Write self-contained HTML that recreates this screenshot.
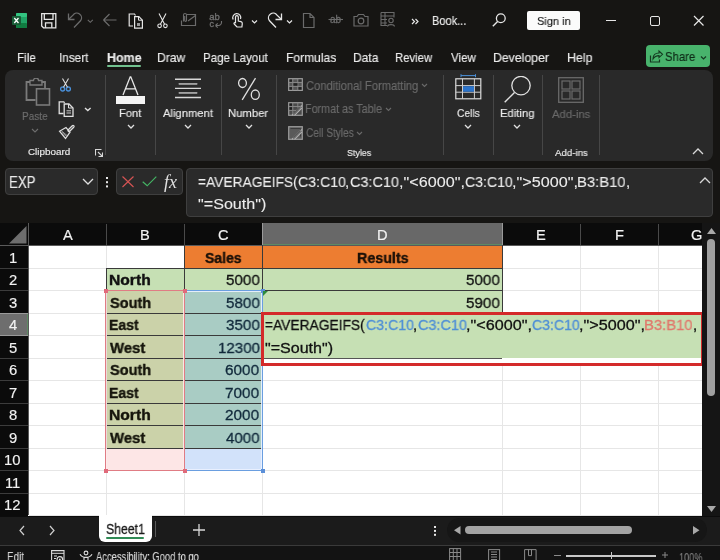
<!DOCTYPE html>
<html><head><meta charset="utf-8">
<style>
*{margin:0;padding:0;box-sizing:border-box}
html,body{width:720px;height:560px;overflow:hidden;background:#161513;font-family:"Liberation Sans",sans-serif;color:#fff}
.a{position:absolute}
svg.a{will-change:transform}
.t{position:absolute;white-space:pre;line-height:1;will-change:transform}
</style></head><body>
<svg class="a" style="left:12px;top:13px" width="16" height="16" viewBox="0 0 16 16"><rect x="4" y="0" width="11" height="15" rx="1.5" fill="#21a366"/><rect x="4" y="0" width="11" height="4" rx="1" fill="#33c481"/><rect x="4" y="10" width="11" height="5" rx="1" fill="#107c41"/><rect x="0" y="3" width="9" height="9" rx="1" fill="#185c37"/><path d="M2.3 5l4.2 5M6.5 5l-4.2 5" stroke="#fff" stroke-width="1.3"/></svg>
<svg class="a" style="left:41px;top:13px" width="16" height="16" viewBox="0 0 16 16"><path d="M.7 .7H14.8V14.8H2.5L.7 13z" fill="none" stroke="#e6e6e6" stroke-width="1.3"/><path d="M3.3 .7V6.3H12V.7M4.5 14.8V9.8H10.8V14.8" fill="none" stroke="#e6e6e6" stroke-width="1.3"/></svg>
<svg class="a" style="left:67px;top:12px" width="16" height="17" viewBox="0 0 16 17"><path d="M7 15.5L13.7 8.5A4.6 4.6 0 0 0 6 3.2L2 7" fill="none" stroke="#6b6b6b" stroke-width="1.3"/><path d="M1.5 1.5V7.5H7.5" fill="none" stroke="#6b6b6b" stroke-width="1.3"/></svg>
<svg class="a" style="left:86.5px;top:18.5px" width="7" height="5" viewBox="0 0 7 5"><path d="M.8 .8l2.5 2.5 2.5-2.5" fill="none" stroke="#6b6b6b" stroke-width="1.1"/></svg>
<svg class="a" style="left:102px;top:12px" width="16" height="16" viewBox="0 0 16 16"><path d="M1.5 8h13M1.5 8l6-6M1.5 8l6 6" fill="none" stroke="#6b6b6b" stroke-width="1.2"/></svg>
<svg class="a" style="left:128px;top:12.5px" width="16" height="17" viewBox="0 0 16 17"><path d="M5 13H1.2V1h5.3l1 1.5" fill="none" stroke="#e6e6e6" stroke-width="1.2"/><path d="M6.6 3.7h4.3l3.5 3.5v7.9H6.6z" fill="none" stroke="#e6e6e6" stroke-width="1.2"/><path d="M10.5 3.7v3.5h3.9" fill="none" stroke="#e6e6e6" stroke-width="1"/><rect x="9" y="10" width="3" height="3" fill="#9a9a9a"/></svg>
<svg class="a" style="left:157px;top:12px" width="11" height="17" viewBox="0 0 11 17"><circle cx="2.6" cy="13.8" r="1.8" fill="none" stroke="#e6e6e6" stroke-width="1.1"/><circle cx="8.4" cy="13.8" r="1.8" fill="none" stroke="#e6e6e6" stroke-width="1.1"/><path d="M3.4 12.2L9 1.5M7.6 12.2L2 1.5" stroke="#e6e6e6" stroke-width="1.1"/></svg>
<svg class="a" style="left:180px;top:12px" width="17" height="15" viewBox="0 0 17 15"><path d="M6.5 2.5h9v11h-14v-5" fill="none" stroke="#6b6b6b" stroke-width="1.2"/><path d="M3.5 9.5V3a1.5 1.5 0 0 1 3 0v5.5a.9.9 0 0 1-1.8 0V4" fill="none" stroke="#6b6b6b" stroke-width="1.1"/><path d="M8 9l7.5-5.5" stroke="#6b6b6b" stroke-width="1.1"/></svg>
<svg class="a" style="left:209px;top:13px" width="15" height="16" viewBox="0 0 15 16"><text x="0.2" y="7.4" font-family="Liberation Sans" font-size="9.5" fill="#707070" stroke="#707070" stroke-width=".35">ab</text><text x="0.4" y="14.2" font-family="Liberation Sans" font-size="9" fill="#707070" stroke="#707070" stroke-width=".35">c</text><path d="M12.5 8v1.5a3 3 0 0 1-3 3H6.5M6.5 12.5l2.2-2.2M6.5 12.5l2.2 2.2" fill="none" stroke="#707070" stroke-width="1.1"/></svg>
<svg class="a" style="left:230px;top:12px" width="15" height="17" viewBox="0 0 15 17"><path d="M5.5 10V5a1.4 1.4 0 0 1 2.8 0v4l2.7.6c1 .3 1.4 1 1.3 2l-.4 3.4H7L4.2 12c-.6-.8 0-1.8 1.3-1.3z" fill="none" stroke="#e6e6e6" stroke-width="1.2"/><path d="M3.2 7.5A4 4 0 1 1 10.5 7" fill="none" stroke="#e6e6e6" stroke-width="1.2"/></svg>
<svg class="a" style="left:251px;top:19px" width="7" height="5" viewBox="0 0 7 5"><path d="M1 1.5l2.5 2.5 2.5-2.5" fill="none" stroke="#e6e6e6" stroke-width="1.2"/></svg>
<svg class="a" style="left:267px;top:12px" width="16" height="17" viewBox="0 0 16 17"><path d="M9 15.5L2.3 8.5A4.6 4.6 0 0 1 10 3.2L14 7" fill="none" stroke="#e6e6e6" stroke-width="1.3"/><path d="M14.5 1.5V7.5H8.5" fill="none" stroke="#e6e6e6" stroke-width="1.3"/></svg>
<svg class="a" style="left:286px;top:19px" width="7" height="5" viewBox="0 0 7 5"><path d="M1 1.5l2.5 2.5 2.5-2.5" fill="none" stroke="#e6e6e6" stroke-width="1.2"/></svg>
<svg class="a" style="left:302px;top:12px" width="14" height="17" viewBox="0 0 14 17"><path d="M1.5 1.5h6.5l4 4v10h-10.5z M8 1.5v4h4" fill="none" stroke="#6b6b6b" stroke-width="1.2"/></svg>
<svg class="a" style="left:328px;top:10px" width="16" height="16" viewBox="0 0 16 16"><text x="2" y="13" font-family="Liberation Sans" font-size="10" fill="#6b6b6b" stroke="#6b6b6b" stroke-width=".3">ab</text><path d="M.5 9.5h14.5" stroke="#6b6b6b" stroke-width="1.1"/></svg>
<svg class="a" style="left:353px;top:12px" width="16" height="16" viewBox="0 0 16 16"><path d="M1 4.5h3l1.5-2h5l1.5 2h3v9.5h-14z" fill="none" stroke="#6b6b6b" stroke-width="1.2"/><circle cx="8" cy="9" r="2.8" fill="none" stroke="#6b6b6b" stroke-width="1.2"/></svg>
<svg class="a" style="left:380px;top:11px" width="16" height="17" viewBox="0 0 16 17"><path d="M1 1.5h13v5M1 1.5v13h6M1 5h13M1 8.5h6M1 12h6M5 1.5v13" fill="none" stroke="#6b6b6b" stroke-width="1.1"/><circle cx="11" cy="9.5" r="2.2" fill="none" stroke="#6b6b6b" stroke-width="1.1"/><path d="M7.5 15.5c.5-2.5 6.5-2.5 7 0" fill="none" stroke="#6b6b6b" stroke-width="1.1"/></svg>
<svg class="a" style="left:410.5px;top:18px" width="9" height="7" viewBox="0 0 9 7"><path d="M1 1l2.5 2.5L1 6M4.5 1L7 3.5 4.5 6" fill="none" stroke="#e6e6e6" stroke-width="1.2"/></svg>
<svg class="a" style="left:492px;top:13px" width="14" height="14" viewBox="0 0 14 14"><circle cx="8.8" cy="5.2" r="4.4" fill="none" stroke="#e6e6e6" stroke-width="1.3"/><path d="M5.6 8.4L0.8 13.2" stroke="#e6e6e6" stroke-width="1.4"/></svg>
<div class="a" style="left:527px;top:11px;width:53px;height:19px;background:#fbfbfb;border-radius:2px"></div>
<div class="a" style="left:606px;top:20px;width:10px;height:1px;background:#e6e6e6;"></div>
<div class="a" style="left:650px;top:16px;width:10px;height:10px;border:1.2px solid #e6e6e6;border-radius:2px"></div>
<svg class="a" style="left:693px;top:15px" width="12" height="12" viewBox="0 0 12 12"><path d="M1 1l9.5 9.5M10.5 1L1 10.5" stroke="#e6e6e6" stroke-width="1.2"/></svg>
<div class="a" style="left:107px;top:65px;width:34px;height:2px;background:#72c28f;border-radius:1px"></div>
<div class="a" style="left:646px;top:45px;width:64px;height:22px;background:#48b36c;border-radius:4px"></div>
<svg class="a" style="left:649px;top:49px" width="15" height="15" viewBox="0 0 15 15"><path d="M1.5 6.5v6.5h9v-2.5" fill="none" stroke="#143820" stroke-width="1.2"/><path d="M4 10c0-4 2.5-6 6-6V2l3.5 3.3L10 8.6V6.6c-3 0-4.5 1-6 3.4z" fill="none" stroke="#143820" stroke-width="1.1"/></svg>
<svg class="a" style="left:700px;top:55px" width="7" height="5" viewBox="0 0 7 5"><path d="M1 1.5l2.5 2.5 2.5-2.5" fill="none" stroke="#143820" stroke-width="1.2"/></svg>
<div class="a" style="left:5px;top:70px;width:708px;height:91px;background:#292929;border-radius:8px"></div>
<div class="a" style="left:105px;top:75px;width:1px;height:80px;background:#464646;"></div>
<div class="a" style="left:155px;top:75px;width:1px;height:80px;background:#464646;"></div>
<div class="a" style="left:221px;top:75px;width:1px;height:80px;background:#464646;"></div>
<div class="a" style="left:276px;top:75px;width:1px;height:80px;background:#464646;"></div>
<div class="a" style="left:443px;top:75px;width:1px;height:80px;background:#464646;"></div>
<div class="a" style="left:493px;top:75px;width:1px;height:80px;background:#464646;"></div>
<div class="a" style="left:542px;top:75px;width:1px;height:80px;background:#464646;"></div>
<div class="a" style="left:599px;top:75px;width:1px;height:80px;background:#464646;"></div>
<svg class="a" style="left:24px;top:78px" width="27" height="28" viewBox="0 0 27 28"><path d="M6 4H2.5v18h9" fill="none" stroke="#7a7a7a" stroke-width="1.8"/><path d="M17.5 4H21v7" fill="none" stroke="#7a7a7a" stroke-width="1.8"/><path d="M6 2.5h3.5a2.5 2.5 0 0 1 5 0H18v4.5H6z" fill="none" stroke="#7a7a7a" stroke-width="1.3"/><rect x="12.5" y="10.8" width="13" height="16.2" fill="none" stroke="#7a7a7a" stroke-width="1.6"/></svg>
<svg class="a" style="left:31px;top:128px" width="8" height="5" viewBox="0 0 8 5"><path d="M1 1l3 3 3-3" fill="none" stroke="#6e6e6e" stroke-width="1.1"/></svg>
<svg class="a" style="left:60px;top:78px" width="11" height="14" viewBox="0 0 11 14"><circle cx="2.6" cy="11" r="2" fill="none" stroke="#4a90d9" stroke-width="1.4"/><circle cx="8.4" cy="11" r="2" fill="none" stroke="#4a90d9" stroke-width="1.4"/><path d="M3.5 9.3L8.5 0.5M7.5 9.3L2.5 0.5" stroke="#dcdcdc" stroke-width="1.1"/></svg>
<svg class="a" style="left:58px;top:101px" width="16" height="16" viewBox="0 0 16 16"><path d="M5.5 12.5H1.2V.8h4.5l1 1" fill="none" stroke="#e0e0e0" stroke-width="1.3"/><path d="M6.2 3h4.8l4 4v8.5H6.2z" fill="none" stroke="#e0e0e0" stroke-width="1.3"/><path d="M10.5 3v4h4" fill="none" stroke="#e0e0e0" stroke-width="1"/><path d="M8.5 9.8h4.5M8.5 12h4.5" stroke="#e0e0e0" stroke-width=".9"/></svg>
<svg class="a" style="left:84px;top:107px" width="8" height="5" viewBox="0 0 8 5"><path d="M1 1l2.8 2.5L6.6 1" fill="none" stroke="#e0e0e0" stroke-width="1.4"/></svg>
<svg class="a" style="left:58px;top:124px" width="17" height="16" viewBox="0 0 17 16"><path d="M11 6.5L15 2.5" stroke="#e0e0e0" stroke-width="3.2" stroke-linecap="round"/><path d="M11 6.5L15 2.5" stroke="#292929" stroke-width="1" stroke-linecap="round"/><path d="M1.5 7.2L8 3.6L12 8.2L7.5 14.5z" fill="none" stroke="#e0e0e0" stroke-width="1.2"/><path d="M4 8.5L9 13M3 6.5l6 5" stroke="#bdbdbd" stroke-width=".8"/></svg>
<svg class="a" style="left:95px;top:149px" width="8" height="8" viewBox="0 0 8 8"><path d="M.5 6.5v-6h6M3 3l4.5 4.5M7.5 3.5v4h-4" fill="none" stroke="#d8d8d8" stroke-width="1.1"/></svg>
<svg class="a" style="left:122px;top:76px" width="17" height="20" viewBox="0 0 17 20"><path d="M1 19L8.2 0.8h.6L16 19M3.5 12.8h10" fill="none" stroke="#e8e8e8" stroke-width="1.3"/></svg>
<div class="a" style="left:116px;top:96px;width:29px;height:8px;background:#f4f4f4;"></div>
<svg class="a" style="left:127px;top:124px" width="8" height="5" viewBox="0 0 8 5"><path d="M1 1l3 3 3-3" fill="none" stroke="#e0e0e0" stroke-width="1.3"/></svg>
<svg class="a" style="left:175px;top:78px" width="26" height="21" viewBox="0 0 26 21"><path d="M0 1.25h26M3.8 5.8h18.4M0 10.4h26M3.8 14.9h18.4M0 19.5h26" stroke="#d8d8d8" stroke-width="1.3"/><path d="M3.8 5.8h18.4M3.8 14.9h18.4" stroke="#a0a0a0" stroke-width="1.4"/></svg>
<svg class="a" style="left:184px;top:124px" width="8" height="5" viewBox="0 0 8 5"><path d="M1 1l3 3 3-3" fill="none" stroke="#e0e0e0" stroke-width="1.3"/></svg>
<svg class="a" style="left:238px;top:77px" width="22" height="24" viewBox="0 0 22 24"><ellipse cx="4.5" cy="6" rx="3.9" ry="4.5" fill="none" stroke="#e0e0e0" stroke-width="1.3"/><ellipse cx="17.3" cy="17.7" rx="4" ry="4.7" fill="none" stroke="#e0e0e0" stroke-width="1.3"/><path d="M17.5 1.2L4.2 22.8" stroke="#e0e0e0" stroke-width="1.3"/></svg>
<svg class="a" style="left:245px;top:124px" width="8" height="5" viewBox="0 0 8 5"><path d="M1 1l3 3 3-3" fill="none" stroke="#e0e0e0" stroke-width="1.3"/></svg>
<svg class="a" style="left:288px;top:78px" width="15" height="13" viewBox="0 0 15 13"><rect x=".7" y=".7" width="13.6" height="11.8" fill="#555" stroke="#9c9c9c" stroke-width="1.2"/><path d="M.7 4.5h13.6M.7 8.4h13.6M4.8 .7v11.8M9.8 .7v11.8" stroke="#8a8a8a" stroke-width=".9"/><rect x="1.5" y="1.5" width="2.5" height="2.3" fill="#222"/><rect x="10.5" y="1.5" width="3" height="2.3" fill="#333"/><rect x="5.5" y="5.2" width="4" height="2.5" fill="#222"/><rect x="1.5" y="9.1" width="2.5" height="2.5" fill="#222"/><rect x="10.5" y="9.1" width="3" height="2.5" fill="#222"/></svg>
<svg class="a" style="left:421px;top:83px" width="7" height="5" viewBox="0 0 7 5"><path d="M1 1l2.5 2.5 2.5-2.5" fill="none" stroke="#6a6a6a" stroke-width="1.1"/></svg>
<svg class="a" style="left:288px;top:102px" width="15" height="14" viewBox="0 0 15 14"><rect x=".7" y=".7" width="13.6" height="12.6" fill="#4a4a4a" stroke="#9c9c9c" stroke-width="1.2"/><path d="M.7 4.5h13.6M.7 8.4h8M4.8 .7v12M9.8 .7v5" stroke="#8a8a8a" stroke-width=".9"/><rect x="1.5" y="1.5" width="2.5" height="2.3" fill="#1e1e1e"/><rect x="1.5" y="5.2" width="2.5" height="2.5" fill="#1e1e1e"/><path d="M4 13.3L13.8 3.5M6.5 13.3l7.3-7.3" stroke="#b0b0b0" stroke-width="1.1"/><path d="M5.2 12.2l7.3-7.3" stroke="#2a2a2a" stroke-width="1"/></svg>
<svg class="a" style="left:385px;top:107px" width="7" height="5" viewBox="0 0 7 5"><path d="M1 1l2.5 2.5 2.5-2.5" fill="none" stroke="#6a6a6a" stroke-width="1.1"/></svg>
<svg class="a" style="left:288px;top:125.5px" width="15" height="14" viewBox="0 0 15 14"><rect x=".7" y=".7" width="13.6" height="12.6" fill="#5a5a5a" stroke="#9c9c9c" stroke-width="1.2"/><path d="M2.5 2.5h10v8" fill="none" stroke="#3a3a3a" stroke-width="1"/><path d="M4 13.3L13.8 3.5M6.5 13.3l7.3-7.3" stroke="#b0b0b0" stroke-width="1.1"/><path d="M5.2 12.2l7.3-7.3" stroke="#2a2a2a" stroke-width="1"/></svg>
<svg class="a" style="left:356px;top:131px" width="7" height="5" viewBox="0 0 7 5"><path d="M1 1l2.5 2.5 2.5-2.5" fill="none" stroke="#6a6a6a" stroke-width="1.1"/></svg>
<svg class="a" style="left:455px;top:74px" width="27" height="26" viewBox="0 0 27 26"><path d="M6 1.6h14.5M6 .2v3M20.5 .2v3" stroke="#4a90d9" stroke-width="1"/><rect x=".8" y="4.8" width="25" height="20" fill="none" stroke="#dcdcdc" stroke-width="1.2"/><path d="M.8 11.6h25M.8 18.2h25M7.5 4.8v20M19.4 4.8v20" stroke="#d0d0d0" stroke-width="1"/><rect x="8" y="12.2" width="11" height="5.5" fill="#2b74cc"/></svg>
<svg class="a" style="left:464px;top:124px" width="8" height="5" viewBox="0 0 8 5"><path d="M1 1l3 3 3-3" fill="none" stroke="#e0e0e0" stroke-width="1.3"/></svg>
<svg class="a" style="left:504px;top:76px" width="28" height="28" viewBox="0 0 28 28"><circle cx="17" cy="9.6" r="9.2" fill="none" stroke="#e0e0e0" stroke-width="1.3"/><path d="M10.5 16.5L.7 26.3" stroke="#e0e0e0" stroke-width="1.4"/></svg>
<svg class="a" style="left:513px;top:124px" width="8" height="5" viewBox="0 0 8 5"><path d="M1 1l3 3 3-3" fill="none" stroke="#e0e0e0" stroke-width="1.3"/></svg>
<svg class="a" style="left:558px;top:77px" width="26" height="26" viewBox="0 0 26 26"><rect x=".7" y=".7" width="24.6" height="24.6" fill="none" stroke="#6a6a6a" stroke-width="1.3"/><rect x="4" y="4" width="8" height="8" fill="none" stroke="#6a6a6a" stroke-width="1.2"/><rect x="14" y="4" width="8" height="8" fill="none" stroke="#6a6a6a" stroke-width="1.2"/><rect x="4" y="14" width="8" height="8" fill="none" stroke="#6a6a6a" stroke-width="1.2"/><rect x="14" y="14" width="8" height="8" fill="none" stroke="#6a6a6a" stroke-width="1.2"/></svg>
<svg class="a" style="left:692px;top:148px" width="12" height="7" viewBox="0 0 12 7"><path d="M1 6l5-5 5 5" fill="none" stroke="#d8d8d8" stroke-width="1.3"/></svg>
<div class="a" style="left:5px;top:168px;width:93px;height:27px;background:#2a2a2a;border:1px solid #3f3f3f;border-radius:4px;box-sizing:border-box"></div>
<svg class="a" style="left:82px;top:178px" width="12" height="7" viewBox="0 0 12 7"><path d="M1 1l5 5 5-5" fill="none" stroke="#e0e0e0" stroke-width="1.3"/></svg>
<svg class="a" style="left:105.5px;top:176.5px" width="2" height="11" viewBox="0 0 2 11"><rect x="0" y="0" width="2" height="2" fill="#e8e8e8"/><rect x="0" y="4.2" width="2" height="2" fill="#e8e8e8"/><rect x="0" y="8.4" width="2" height="2" fill="#e8e8e8"/></svg>
<div class="a" style="left:116px;top:168px;width:67px;height:27px;background:#2a2a2a;border:1px solid #3f3f3f;border-radius:4px;box-sizing:border-box"></div>
<svg class="a" style="left:121.5px;top:176px" width="12" height="12" viewBox="0 0 12 12"><path d="M.5 .5l11 10.5M11.5 .5L.5 11" stroke="#d65454" stroke-width="1.15"/></svg>
<svg class="a" style="left:141.8px;top:176px" width="15" height="11" viewBox="0 0 15 11"><path d="M.7 5.8l4.5 4L14.3 .7" fill="none" stroke="#44b464" stroke-width="1.2"/></svg>
<div class="t" style="left:164px;top:172.5px;font-family:'Liberation Serif';font-style:italic;font-size:18px;color:#e0e0e0">fx</div>
<div class="a" style="left:186px;top:168px;width:527px;height:49px;background:#2a2a2a;border:1px solid #3f3f3f;border-radius:4px;box-sizing:border-box"></div>
<svg class="a" style="left:699px;top:177px" width="12" height="7" viewBox="0 0 12 7"><path d="M1 6l5-5 5 5" fill="none" stroke="#d8d8d8" stroke-width="1.3"/></svg>
<div class="a" style="left:0px;top:223px;width:702px;height:293px;background:#ffffff;"></div>
<div class="a" style="left:0px;top:223px;width:702px;height:22px;background:#0b0b0b;"></div>
<div class="a" style="left:0px;top:223px;width:28px;height:293px;background:#0b0b0b;"></div>
<svg class="a" style="left:9px;top:226px" width="18" height="18" viewBox="0 0 18 18"><path d="M17.5 0V17.5H0z" fill="#6e6e6e"/></svg>
<div class="a" style="left:263px;top:223px;width:239px;height:22px;background:#686868;"></div>
<div class="a" style="left:0px;top:314px;width:28px;height:21px;background:#6e6e6e;"></div>
<div class="a" style="left:106px;top:246px;width:1px;height:269px;background:#e6e6e6;"></div>
<div class="a" style="left:184px;top:246px;width:1px;height:269px;background:#e6e6e6;"></div>
<div class="a" style="left:262px;top:246px;width:1px;height:269px;background:#e6e6e6;"></div>
<div class="a" style="left:502px;top:246px;width:1px;height:269px;background:#e6e6e6;"></div>
<div class="a" style="left:580px;top:246px;width:1px;height:269px;background:#e6e6e6;"></div>
<div class="a" style="left:658px;top:246px;width:1px;height:269px;background:#e6e6e6;"></div>
<div class="a" style="left:29px;top:268px;width:673px;height:1px;background:#e6e6e6;"></div>
<div class="a" style="left:29px;top:290px;width:673px;height:1px;background:#e6e6e6;"></div>
<div class="a" style="left:29px;top:313px;width:673px;height:1px;background:#e6e6e6;"></div>
<div class="a" style="left:29px;top:335px;width:673px;height:1px;background:#e6e6e6;"></div>
<div class="a" style="left:29px;top:358px;width:673px;height:1px;background:#e6e6e6;"></div>
<div class="a" style="left:29px;top:380px;width:673px;height:1px;background:#e6e6e6;"></div>
<div class="a" style="left:29px;top:403px;width:673px;height:1px;background:#e6e6e6;"></div>
<div class="a" style="left:29px;top:425px;width:673px;height:1px;background:#e6e6e6;"></div>
<div class="a" style="left:29px;top:448px;width:673px;height:1px;background:#e6e6e6;"></div>
<div class="a" style="left:29px;top:470px;width:673px;height:1px;background:#e6e6e6;"></div>
<div class="a" style="left:29px;top:493px;width:673px;height:1px;background:#e6e6e6;"></div>
<div class="a" style="left:29px;top:515px;width:673px;height:1px;background:#e6e6e6;"></div>
<div class="a" style="left:28px;top:223px;width:1px;height:292px;background:#5a5a5a;"></div>
<div class="a" style="left:0px;top:245px;width:702px;height:1px;background:#5a5a5a;"></div>
<div class="a" style="left:106px;top:224px;width:1px;height:21px;background:#4a4a4a;"></div>
<div class="a" style="left:184px;top:224px;width:1px;height:21px;background:#4a4a4a;"></div>
<div class="a" style="left:262px;top:224px;width:1px;height:21px;background:#4a4a4a;"></div>
<div class="a" style="left:502px;top:224px;width:1px;height:21px;background:#4a4a4a;"></div>
<div class="a" style="left:580px;top:224px;width:1px;height:21px;background:#4a4a4a;"></div>
<div class="a" style="left:658px;top:224px;width:1px;height:21px;background:#4a4a4a;"></div>
<div class="a" style="left:0px;top:268px;width:28px;height:1px;background:#3c3c3c;"></div>
<div class="a" style="left:0px;top:290px;width:28px;height:1px;background:#3c3c3c;"></div>
<div class="a" style="left:0px;top:313px;width:28px;height:1px;background:#3c3c3c;"></div>
<div class="a" style="left:0px;top:335px;width:28px;height:1px;background:#3c3c3c;"></div>
<div class="a" style="left:0px;top:358px;width:28px;height:1px;background:#3c3c3c;"></div>
<div class="a" style="left:0px;top:380px;width:28px;height:1px;background:#3c3c3c;"></div>
<div class="a" style="left:0px;top:403px;width:28px;height:1px;background:#3c3c3c;"></div>
<div class="a" style="left:0px;top:425px;width:28px;height:1px;background:#3c3c3c;"></div>
<div class="a" style="left:0px;top:448px;width:28px;height:1px;background:#3c3c3c;"></div>
<div class="a" style="left:0px;top:470px;width:28px;height:1px;background:#3c3c3c;"></div>
<div class="a" style="left:0px;top:493px;width:28px;height:1px;background:#3c3c3c;"></div>
<div class="a" style="left:263px;top:244px;width:239px;height:1px;background:#5f8a64;"></div>
<div class="a" style="left:262px;top:223px;width:1px;height:22px;background:#9a9a9a;"></div>
<div class="a" style="left:502px;top:223px;width:1px;height:22px;background:#9a9a9a;"></div>
<div class="a" style="left:27px;top:314px;width:1px;height:21px;background:#5f8a64;"></div>
<div class="a" style="left:0px;top:313px;width:28px;height:1px;background:#9a9a9a;"></div>
<div class="a" style="left:0px;top:335px;width:28px;height:1px;background:#9a9a9a;"></div>
<div class="a" style="left:184px;top:245px;width:319px;height:24px;background:#ed7d31;"></div>
<div class="a" style="left:106px;top:268px;width:157px;height:23px;background:#c6e0b4;"></div>
<div class="a" style="left:262px;top:268px;width:241px;height:91px;background:#c6e0b4;"></div>
<div class="a" style="left:106px;top:290px;width:79px;height:159px;background:#cbd2a9;"></div>
<div class="a" style="left:184px;top:290px;width:79px;height:159px;background:#a9ccc4;"></div>
<div class="a" style="left:106px;top:268px;width:397px;height:1px;background:#3a3a3a;"></div>
<div class="a" style="left:106px;top:290px;width:397px;height:1px;background:#3a3a3a;"></div>
<div class="a" style="left:106px;top:313px;width:397px;height:1px;background:#3a3a3a;"></div>
<div class="a" style="left:106px;top:335px;width:157px;height:1px;background:#3a3a3a;"></div>
<div class="a" style="left:106px;top:358px;width:157px;height:1px;background:#3a3a3a;"></div>
<div class="a" style="left:106px;top:380px;width:157px;height:1px;background:#3a3a3a;"></div>
<div class="a" style="left:106px;top:403px;width:157px;height:1px;background:#3a3a3a;"></div>
<div class="a" style="left:106px;top:425px;width:157px;height:1px;background:#3a3a3a;"></div>
<div class="a" style="left:106px;top:448px;width:157px;height:1px;background:#3a3a3a;"></div>
<div class="a" style="left:184px;top:245px;width:319px;height:1px;background:#5a5a5a;"></div>
<div class="a" style="left:106px;top:268px;width:1px;height:181px;background:#3a3a3a;"></div>
<div class="a" style="left:184px;top:245px;width:1px;height:204px;background:#3a3a3a;"></div>
<div class="a" style="left:262px;top:245px;width:1px;height:204px;background:#3a3a3a;"></div>
<div class="a" style="left:502px;top:245px;width:1px;height:69px;background:#3a3a3a;"></div>
<div class="a" style="left:262px;top:313px;width:241px;height:1px;background:#3a3a3a;"></div>
<div class="a" style="left:107px;top:449px;width:77px;height:21px;background:#fde6e6;"></div>
<div class="a" style="left:185px;top:449px;width:77px;height:21px;background:#d2e2fa;"></div>
<div class="a" style="left:106px;top:290px;width:1px;height:181px;background:rgba(255,235,235,.9);"></div>
<div class="a" style="left:183px;top:291px;width:1px;height:179px;background:rgba(255,235,235,.9);"></div>
<div class="a" style="left:106px;top:290px;width:77px;height:1px;background:rgba(255,235,235,.9);"></div>
<div class="a" style="left:106px;top:470px;width:77px;height:1px;background:rgba(255,235,235,.9);"></div>
<div class="a" style="left:105px;top:290px;width:80px;height:1px;background:#e07c84;"></div>
<div class="a" style="left:105px;top:290px;width:1px;height:181px;background:#e07c84;"></div>
<div class="a" style="left:184px;top:290px;width:1px;height:181px;background:#e07c84;"></div>
<div class="a" style="left:105px;top:470px;width:80px;height:1px;background:#e07c84;"></div>
<div class="a" style="left:185px;top:291px;width:76px;height:1px;background:rgba(235,242,255,.9);"></div>
<div class="a" style="left:185px;top:469px;width:76px;height:1px;background:rgba(235,242,255,.9);"></div>
<div class="a" style="left:261px;top:291px;width:1px;height:179px;background:rgba(235,242,255,.9);"></div>
<div class="a" style="left:184px;top:290px;width:79px;height:1px;background:#6a9ee0;"></div>
<div class="a" style="left:262px;top:290px;width:1px;height:181px;background:#6a9ee0;"></div>
<div class="a" style="left:184px;top:470px;width:79px;height:1px;background:#6a9ee0;"></div>
<div class="a" style="left:103.5px;top:288.5px;width:4px;height:4px;background:#e06a7a;"></div>
<div class="a" style="left:182.5px;top:288.5px;width:4px;height:4px;background:#e06a7a;"></div>
<div class="a" style="left:103.5px;top:468.5px;width:4px;height:4px;background:#e06a7a;"></div>
<div class="a" style="left:182.5px;top:468.5px;width:4px;height:4px;background:#e06a7a;"></div>
<div class="a" style="left:260.5px;top:288.5px;width:4px;height:4px;background:#5b8fd8;"></div>
<div class="a" style="left:260.5px;top:468.5px;width:4px;height:4px;background:#5b8fd8;"></div>
<svg class="a" style="left:263px;top:291px" width="5" height="5" viewBox="0 0 5 5"><path d="M0 0h5L0 5z" fill="#2e8b3e"/></svg>
<div class="a" style="left:261px;top:312px;width:443px;height:54px;background:#ffffff;border:3px solid #d42a2a;box-sizing:border-box"></div>
<div class="a" style="left:264px;top:315px;width:437px;height:43px;background:#c6e0b4;"></div>
<div class="a" style="left:264px;top:358px;width:238px;height:1px;background:#555;"></div>
<div class="a" style="left:702px;top:223px;width:18px;height:293px;background:#151515;"></div>
<svg class="a" style="left:707px;top:228px" width="9" height="6" viewBox="0 0 9 6"><path d="M4.5 0L9 6H0z" fill="#a8a8a8"/></svg>
<div class="a" style="left:707px;top:239px;width:8px;height:157px;background:#a0a0a0;border-radius:4px"></div>
<svg class="a" style="left:707px;top:506px" width="9" height="6" viewBox="0 0 9 6"><path d="M0 0h9L4.5 6z" fill="#a8a8a8"/></svg>
<div class="a" style="left:0px;top:516px;width:720px;height:29px;background:#1b1b1b;"></div>
<div class="a" style="left:0px;top:516px;width:720px;height:1px;background:#0c0c0c;"></div>
<svg class="a" style="left:19px;top:525px" width="7" height="11" viewBox="0 0 7 11"><path d="M5 1L1 5.5 5 10" fill="none" stroke="#cfcfcf" stroke-width="1.2"/></svg>
<svg class="a" style="left:49px;top:525px" width="7" height="11" viewBox="0 0 7 11"><path d="M1 1l4 4.5L1 10" fill="none" stroke="#cfcfcf" stroke-width="1.2"/></svg>
<div class="a" style="left:99px;top:515px;width:53px;height:27px;background:#ffffff;border-radius:0 0 6px 6px"></div>
<div class="a" style="left:106px;top:537px;width:38px;height:2px;background:#2f8a55;border-radius:1px"></div>
<div class="a" style="left:155px;top:521px;width:1px;height:16px;background:#5a5a5a;"></div>
<svg class="a" style="left:193px;top:524px" width="12" height="12" viewBox="0 0 12 12"><path d="M6 0v12M0 6h12" stroke="#d8d8d8" stroke-width="1.3"/></svg>
<div class="a" style="left:447px;top:518px;width:260px;height:24px;background:#161616;border-radius:12px"></div>
<svg class="a" style="left:433.5px;top:526px" width="2" height="10" viewBox="0 0 2 10"><rect x="0" y="0" width="2" height="2" fill="#e8e8e8"/><rect x="0" y="3.9" width="2" height="2" fill="#e8e8e8"/><rect x="0" y="7.8" width="2" height="2" fill="#e8e8e8"/></svg>
<svg class="a" style="left:454px;top:526px" width="7" height="9" viewBox="0 0 7 9"><path d="M6.5 0v8.5L0 4.25z" fill="#a8a8a8"/></svg>
<div class="a" style="left:465px;top:526px;width:167px;height:8px;background:#a3a3a3;border-radius:4px"></div>
<svg class="a" style="left:692.5px;top:526px" width="7" height="9" viewBox="0 0 7 9"><path d="M0 0v8.5l6.5-4.25z" fill="#a8a8a8"/></svg>
<div class="a" style="left:0px;top:545px;width:720px;height:15px;background:#131313;"></div>
<div class="a" style="left:0px;top:545px;width:720px;height:1px;background:#3a3a3a;"></div>
<svg class="a" style="left:50.5px;top:550px" width="14" height="12" viewBox="0 0 14 12"><path d="M.6 11V.6h12.4V11" fill="none" stroke="#dcdcdc" stroke-width="1.1"/><path d="M.6 3.3h12.4M3 6h3M3 8.5h2" stroke="#dcdcdc" stroke-width="1"/><circle cx="8.8" cy="9.5" r="2.8" fill="none" stroke="#dcdcdc" stroke-width="1.2"/><circle cx="8.8" cy="9.5" r="1" fill="#dcdcdc"/></svg>
<svg class="a" style="left:79px;top:549.5px" width="15" height="11" viewBox="0 0 15 11"><circle cx="7" cy="3" r="1.9" fill="none" stroke="#dcdcdc" stroke-width="1.1"/><path d="M1 4.2c1.2 2.2 3 3.2 6 3.2s4.8-1 6-3.2M5 7.3v3.5l-1.2 3M9 7.3v3" fill="none" stroke="#dcdcdc" stroke-width="1.1"/><path d="M8.5 12.5l1.5 1.5 3.5-3.5" fill="none" stroke="#dcdcdc" stroke-width="1.1"/></svg>
<svg class="a" style="left:449px;top:548px" width="13" height="14" viewBox="0 0 13 14"><rect x=".6" y=".6" width="11" height="13" fill="none" stroke="#8a8a8a" stroke-width="1"/><path d="M.6 4.5h11M.6 8.5h11M4.3 .6v13M8 .6v13" stroke="#8a8a8a" stroke-width="1"/></svg>
<svg class="a" style="left:487.5px;top:549px" width="13" height="14" viewBox="0 0 13 14"><rect x=".6" y=".6" width="11" height="13" fill="none" stroke="#8a8a8a" stroke-width="1"/><path d="M3 3h6M3 5.5h6M3 8h6M3 10.5h6" stroke="#8a8a8a" stroke-width="1"/></svg>
<svg class="a" style="left:524px;top:549px" width="13" height="14" viewBox="0 0 13 14"><path d="M.6 14V.6h11.5V14M4.5 .6v6h3v-6" fill="none" stroke="#8a8a8a" stroke-width="1"/></svg>
<div class="a" style="left:554px;top:555px;width:7px;height:1px;background:#8a8a8a;"></div>
<div class="a" style="left:566px;top:555px;width:90px;height:1.5px;background:#c8c8c8;"></div>
<div class="a" style="left:610.5px;top:552px;width:1.5px;height:7px;background:#c8c8c8;"></div>
<svg class="a" style="left:662px;top:552px" width="7" height="7" viewBox="0 0 7 7"><path d="M3 0v6M0 3h6" stroke="#8a8a8a" stroke-width="1"/></svg>
<div class="t" style="left:431.64px;top:15.06px;font-size:12.45px;color:#ececec;font-weight:normal;transform:scaleX(0.8868);transform-origin:0 0;-webkit-text-stroke:0.15px #ececec;">Book...</div>
<div class="t" style="left:536.85px;top:15.60px;font-size:11.81px;color:#1a1a1a;font-weight:normal;transform:scaleX(0.9353);transform-origin:0 0;-webkit-text-stroke:0.15px #1a1a1a;">Sign in</div>
<div class="t" style="left:16.58px;top:52.06px;font-size:12.80px;color:#ececec;font-weight:normal;transform:scaleX(0.9158);transform-origin:0 0;-webkit-text-stroke:0.15px #ececec;">File</div>
<div class="t" style="left:59.08px;top:52.06px;font-size:12.80px;color:#ececec;font-weight:normal;transform:scaleX(0.9175);transform-origin:0 0;-webkit-text-stroke:0.15px #ececec;">Insert</div>
<div class="t" style="left:106.72px;top:52.06px;font-size:12.80px;color:#ececec;font-weight:bold;transform:scaleX(0.9724);transform-origin:0 0;-webkit-text-stroke:0.15px #ececec;">Home</div>
<div class="t" style="left:157.05px;top:52.06px;font-size:12.80px;color:#ececec;font-weight:normal;transform:scaleX(0.9473);transform-origin:0 0;-webkit-text-stroke:0.15px #ececec;">Draw</div>
<div class="t" style="left:202.60px;top:52.06px;font-size:12.80px;color:#ececec;font-weight:normal;transform:scaleX(0.9022);transform-origin:0 0;-webkit-text-stroke:0.15px #ececec;">Page Layout</div>
<div class="t" style="left:286.06px;top:52.06px;font-size:12.80px;color:#ececec;font-weight:normal;transform:scaleX(0.9432);transform-origin:0 0;-webkit-text-stroke:0.15px #ececec;">Formulas</div>
<div class="t" style="left:353.06px;top:52.06px;font-size:12.80px;color:#ececec;font-weight:normal;transform:scaleX(0.9379);transform-origin:0 0;-webkit-text-stroke:0.15px #ececec;">Data</div>
<div class="t" style="left:395.11px;top:52.06px;font-size:12.80px;color:#ececec;font-weight:normal;transform:scaleX(0.8874);transform-origin:0 0;-webkit-text-stroke:0.15px #ececec;">Review</div>
<div class="t" style="left:451.00px;top:52.06px;font-size:12.80px;color:#ececec;font-weight:normal;transform:scaleX(0.9034);transform-origin:0 0;-webkit-text-stroke:0.15px #ececec;">View</div>
<div class="t" style="left:493.04px;top:52.06px;font-size:12.80px;color:#ececec;font-weight:normal;transform:scaleX(0.9600);transform-origin:0 0;-webkit-text-stroke:0.15px #ececec;">Developer</div>
<div class="t" style="left:566.53px;top:52.06px;font-size:12.80px;color:#ececec;font-weight:normal;transform:scaleX(0.9673);transform-origin:0 0;-webkit-text-stroke:0.15px #ececec;">Help</div>
<div class="t" style="left:665.14px;top:50.66px;font-size:12.80px;color:#0e2a17;font-weight:normal;transform:scaleX(0.8874);transform-origin:0 0;-webkit-text-stroke:0.15px #0e2a17;">Share</div>
<div class="t" style="left:21.61px;top:110.22px;font-size:11.66px;color:#6e6e6e;font-weight:normal;transform:scaleX(0.8649);transform-origin:0 0;-webkit-text-stroke:0.15px #6e6e6e;">Paste</div>
<div class="t" style="left:28.34px;top:147.39px;font-size:9.82px;color:#ececec;font-weight:normal;transform:scaleX(1.0049);transform-origin:0 0;-webkit-text-stroke:0.15px #ececec;">Clipboard</div>
<div class="t" style="left:118.63px;top:107.60px;font-size:11.81px;color:#ececec;font-weight:normal;transform:scaleX(0.9454);transform-origin:0 0;-webkit-text-stroke:0.15px #ececec;">Font</div>
<div class="t" style="left:163.00px;top:107.60px;font-size:11.81px;color:#ececec;font-weight:normal;transform:scaleX(0.9516);transform-origin:0 0;-webkit-text-stroke:0.15px #ececec;">Alignment</div>
<div class="t" style="left:227.87px;top:107.60px;font-size:11.81px;color:#ececec;font-weight:normal;transform:scaleX(0.9570);transform-origin:0 0;-webkit-text-stroke:0.15px #ececec;">Number</div>
<div class="t" style="left:305.73px;top:79.86px;font-size:12.09px;color:#6a6a6a;font-weight:normal;transform:scaleX(0.9240);transform-origin:0 0;-webkit-text-stroke:0.15px #6a6a6a;">Conditional Formatting</div>
<div class="t" style="left:305.16px;top:103.36px;font-size:12.09px;color:#6a6a6a;font-weight:normal;transform:scaleX(0.8915);transform-origin:0 0;-webkit-text-stroke:0.15px #6a6a6a;">Format as Table</div>
<div class="t" style="left:305.53px;top:127.36px;font-size:12.09px;color:#6a6a6a;font-weight:normal;transform:scaleX(0.8368);transform-origin:0 0;-webkit-text-stroke:0.15px #6a6a6a;">Cell Styles</div>
<div class="t" style="left:347.22px;top:147.89px;font-size:9.82px;color:#ececec;font-weight:normal;transform:scaleX(0.9095);transform-origin:0 0;-webkit-text-stroke:0.15px #ececec;">Styles</div>
<div class="t" style="left:456.52px;top:107.60px;font-size:11.81px;color:#ececec;font-weight:normal;transform:scaleX(0.8689);transform-origin:0 0;-webkit-text-stroke:0.15px #ececec;">Cells</div>
<div class="t" style="left:499.87px;top:107.60px;font-size:11.81px;color:#ececec;font-weight:normal;transform:scaleX(0.9561);transform-origin:0 0;-webkit-text-stroke:0.15px #ececec;">Editing</div>
<div class="t" style="left:552.00px;top:109.35px;font-size:11.81px;color:#6a6a6a;font-weight:normal;transform:scaleX(0.9581);transform-origin:0 0;-webkit-text-stroke:0.15px #6a6a6a;">Add-ins</div>
<div class="t" style="left:554.50px;top:147.69px;font-size:9.82px;color:#ececec;font-weight:normal;transform:scaleX(0.9857);transform-origin:0 0;-webkit-text-stroke:0.15px #ececec;">Add-ins</div>
<div class="t" style="left:8.96px;top:174.85px;font-size:15.65px;color:#ececec;font-weight:normal;transform:scaleX(0.8495);transform-origin:0 0;-webkit-text-stroke:0.15px #ececec;">EXP</div>
<div class="t" style="left:62.58px;top:228.49px;font-size:14.65px;color:#f2f2f2;font-weight:normal;-webkit-text-stroke:0.15px #f2f2f2;">A</div>
<div class="t" style="left:140.35px;top:228.49px;font-size:14.65px;color:#f2f2f2;font-weight:normal;-webkit-text-stroke:0.15px #f2f2f2;">B</div>
<div class="t" style="left:218.12px;top:228.49px;font-size:14.65px;color:#f2f2f2;font-weight:normal;-webkit-text-stroke:0.15px #f2f2f2;">C</div>
<div class="t" style="left:376.89px;top:228.49px;font-size:14.65px;color:#f2f2f2;font-weight:normal;-webkit-text-stroke:0.15px #f2f2f2;">D</div>
<div class="t" style="left:536.35px;top:228.49px;font-size:14.65px;color:#f2f2f2;font-weight:normal;-webkit-text-stroke:0.15px #f2f2f2;">E</div>
<div class="t" style="left:614.69px;top:228.49px;font-size:14.65px;color:#f2f2f2;font-weight:normal;-webkit-text-stroke:0.15px #f2f2f2;">F</div>
<div class="t" style="left:691.01px;top:228.49px;font-size:14.65px;color:#f2f2f2;font-weight:normal;-webkit-text-stroke:0.15px #f2f2f2;">G</div>
<div class="t" style="left:8.52px;top:250.77px;font-size:14.79px;color:#f2f2f2;font-weight:normal;-webkit-text-stroke:0.15px #f2f2f2;">1</div>
<div class="t" style="left:8.64px;top:272.77px;font-size:14.79px;color:#f2f2f2;font-weight:normal;-webkit-text-stroke:0.15px #f2f2f2;">2</div>
<div class="t" style="left:8.75px;top:295.77px;font-size:14.79px;color:#f2f2f2;font-weight:normal;-webkit-text-stroke:0.15px #f2f2f2;">3</div>
<div class="t" style="left:8.75px;top:317.77px;font-size:14.79px;color:#f2f2f2;font-weight:normal;-webkit-text-stroke:0.15px #f2f2f2;">4</div>
<div class="t" style="left:8.75px;top:340.77px;font-size:14.79px;color:#f2f2f2;font-weight:normal;-webkit-text-stroke:0.15px #f2f2f2;">5</div>
<div class="t" style="left:8.64px;top:362.77px;font-size:14.79px;color:#f2f2f2;font-weight:normal;-webkit-text-stroke:0.15px #f2f2f2;">6</div>
<div class="t" style="left:8.64px;top:385.77px;font-size:14.79px;color:#f2f2f2;font-weight:normal;-webkit-text-stroke:0.15px #f2f2f2;">7</div>
<div class="t" style="left:8.75px;top:407.77px;font-size:14.79px;color:#f2f2f2;font-weight:normal;-webkit-text-stroke:0.15px #f2f2f2;">8</div>
<div class="t" style="left:8.64px;top:430.77px;font-size:14.79px;color:#f2f2f2;font-weight:normal;-webkit-text-stroke:0.15px #f2f2f2;">9</div>
<div class="t" style="left:4.29px;top:452.77px;font-size:14.79px;color:#f2f2f2;font-weight:normal;-webkit-text-stroke:0.15px #f2f2f2;">10</div>
<div class="t" style="left:4.96px;top:475.77px;font-size:14.79px;color:#f2f2f2;font-weight:normal;-webkit-text-stroke:0.15px #f2f2f2;">11</div>
<div class="t" style="left:4.41px;top:497.77px;font-size:14.79px;color:#f2f2f2;font-weight:normal;-webkit-text-stroke:0.15px #f2f2f2;">12</div>
<div class="t" style="left:205.28px;top:249.83px;font-size:15.08px;color:#1a1008;font-weight:bold;transform:scaleX(0.9272);transform-origin:0 0;-webkit-text-stroke:0.4px #1a1008;">Sales</div>
<div class="t" style="left:356.91px;top:249.83px;font-size:15.08px;color:#1a1008;font-weight:bold;transform:scaleX(0.9487);transform-origin:0 0;-webkit-text-stroke:0.4px #1a1008;">Results</div>
<div class="t" style="left:109.02px;top:271.99px;font-size:15.36px;color:#111;font-weight:bold;transform:scaleX(1.0190);transform-origin:0 0;-webkit-text-stroke:0.4px #111;">North</div>
<div class="t" style="left:225.73px;top:271.99px;font-size:15.36px;color:#111;font-weight:normal;transform:scaleX(0.9876);transform-origin:0 0;-webkit-text-stroke:0.3px #111;">5000</div>
<div class="t" style="left:109.77px;top:294.99px;font-size:15.36px;color:#16150c;font-weight:bold;transform:scaleX(0.9463);transform-origin:0 0;-webkit-text-stroke:0.4px #16150c;">South</div>
<div class="t" style="left:225.73px;top:294.99px;font-size:15.36px;color:#10283a;font-weight:normal;transform:scaleX(0.9876);transform-origin:0 0;-webkit-text-stroke:0.3px #10283a;">5800</div>
<div class="t" style="left:109.12px;top:316.99px;font-size:15.36px;color:#16150c;font-weight:bold;transform:scaleX(0.9152);transform-origin:0 0;-webkit-text-stroke:0.4px #16150c;">East</div>
<div class="t" style="left:225.73px;top:316.99px;font-size:15.36px;color:#10283a;font-weight:normal;transform:scaleX(0.9876);transform-origin:0 0;-webkit-text-stroke:0.3px #10283a;">3500</div>
<div class="t" style="left:110.00px;top:339.99px;font-size:15.36px;color:#16150c;font-weight:bold;transform:scaleX(0.9697);transform-origin:0 0;-webkit-text-stroke:0.4px #16150c;">West</div>
<div class="t" style="left:217.56px;top:339.99px;font-size:15.36px;color:#10283a;font-weight:normal;transform:scaleX(0.9812);transform-origin:0 0;-webkit-text-stroke:0.3px #10283a;">12300</div>
<div class="t" style="left:109.77px;top:361.99px;font-size:15.36px;color:#16150c;font-weight:bold;transform:scaleX(0.9463);transform-origin:0 0;-webkit-text-stroke:0.4px #16150c;">South</div>
<div class="t" style="left:225.48px;top:361.99px;font-size:15.36px;color:#10283a;font-weight:normal;transform:scaleX(0.9948);transform-origin:0 0;-webkit-text-stroke:0.3px #10283a;">6000</div>
<div class="t" style="left:109.12px;top:384.99px;font-size:15.36px;color:#16150c;font-weight:bold;transform:scaleX(0.9152);transform-origin:0 0;-webkit-text-stroke:0.4px #16150c;">East</div>
<div class="t" style="left:225.48px;top:384.99px;font-size:15.36px;color:#10283a;font-weight:normal;transform:scaleX(0.9948);transform-origin:0 0;-webkit-text-stroke:0.3px #10283a;">7000</div>
<div class="t" style="left:109.02px;top:406.99px;font-size:15.36px;color:#16150c;font-weight:bold;transform:scaleX(1.0190);transform-origin:0 0;-webkit-text-stroke:0.4px #16150c;">North</div>
<div class="t" style="left:225.48px;top:406.99px;font-size:15.36px;color:#10283a;font-weight:normal;transform:scaleX(0.9948);transform-origin:0 0;-webkit-text-stroke:0.3px #10283a;">2000</div>
<div class="t" style="left:110.00px;top:429.99px;font-size:15.36px;color:#16150c;font-weight:bold;transform:scaleX(0.9697);transform-origin:0 0;-webkit-text-stroke:0.4px #16150c;">West</div>
<div class="t" style="left:225.96px;top:429.99px;font-size:15.36px;color:#10283a;font-weight:normal;transform:scaleX(0.9805);transform-origin:0 0;-webkit-text-stroke:0.3px #10283a;">4000</div>
<div class="t" style="left:465.53px;top:271.99px;font-size:15.36px;color:#111;font-weight:normal;transform:scaleX(0.9876);transform-origin:0 0;-webkit-text-stroke:0.3px #111;">5000</div>
<div class="t" style="left:465.53px;top:294.99px;font-size:15.36px;color:#111;font-weight:normal;transform:scaleX(0.9876);transform-origin:0 0;-webkit-text-stroke:0.3px #111;">5900</div>
<div class="t" style="left:105.62px;top:521.62px;font-size:14.51px;color:#1a1a1a;font-weight:normal;transform:scaleX(0.8455);transform-origin:0 0;-webkit-text-stroke:0.3px #1a1a1a;">Sheet1</div>
<div class="t" style="left:6.83px;top:551.26px;font-size:12.80px;color:#d8d8d8;font-weight:normal;transform:scaleX(0.7724);transform-origin:0 0;-webkit-text-stroke:0.15px #d8d8d8;">Edit</div>
<div class="t" style="left:96.30px;top:551.26px;font-size:12.80px;color:#d8d8d8;font-weight:normal;transform:scaleX(0.7339);transform-origin:0 0;-webkit-text-stroke:0.15px #d8d8d8;">Accessibility: Good to go</div>
<div class="t" style="left:679.43px;top:551.86px;font-size:12.09px;color:#7a7a7a;font-weight:normal;transform:scaleX(0.7548);transform-origin:0 0;-webkit-text-stroke:0.15px #7a7a7a;">100%</div>
<div class="t" style="left:265.25px;top:318.25px;font-size:14.94px;color:#111;font-weight:normal;transform:scaleX(0.9229);transform-origin:0 0;-webkit-text-stroke:0.3px #111;">=AVERAGEIFS(</div>
<div class="t" style="left:197.95px;top:175.35px;font-size:14.94px;color:#ececec;font-weight:normal;transform:scaleX(0.9229);transform-origin:0 0;-webkit-text-stroke:0.1px #ececec;">=AVERAGEIFS(</div>
<div class="t" style="left:365.64px;top:318.25px;font-size:14.94px;color:#4f8fd6;font-weight:normal;transform:scaleX(0.9481);transform-origin:0 0;-webkit-text-stroke:0.3px #4f8fd6;">C3:C10</div>
<div class="t" style="left:298.34px;top:175.35px;font-size:14.94px;color:#ececec;font-weight:normal;transform:scaleX(0.9481);transform-origin:0 0;-webkit-text-stroke:0.1px #ececec;">C3:C10</div>
<div class="t" style="left:412.73px;top:318.25px;font-size:14.94px;color:#111;font-weight:normal;-webkit-text-stroke:0.3px #111;">,</div>
<div class="t" style="left:345.43px;top:175.35px;font-size:14.94px;color:#ececec;font-weight:normal;-webkit-text-stroke:0.1px #ececec;">,</div>
<div class="t" style="left:417.62px;top:318.25px;font-size:14.94px;color:#4f8fd6;font-weight:normal;transform:scaleX(0.9683);transform-origin:0 0;-webkit-text-stroke:0.3px #4f8fd6;">C3:C10</div>
<div class="t" style="left:350.32px;top:175.35px;font-size:14.94px;color:#ececec;font-weight:normal;transform:scaleX(0.9683);transform-origin:0 0;-webkit-text-stroke:0.1px #ececec;">C3:C10</div>
<div class="t" style="left:465.94px;top:318.25px;font-size:14.94px;color:#111;font-weight:normal;transform:scaleX(1.0825);transform-origin:0 0;-webkit-text-stroke:0.3px #111;">,"&lt;6000",</div>
<div class="t" style="left:398.64px;top:175.35px;font-size:14.94px;color:#ececec;font-weight:normal;transform:scaleX(1.0825);transform-origin:0 0;-webkit-text-stroke:0.1px #ececec;">,"&lt;6000",</div>
<div class="t" style="left:532.14px;top:318.25px;font-size:14.94px;color:#4f8fd6;font-weight:normal;transform:scaleX(0.9441);transform-origin:0 0;-webkit-text-stroke:0.3px #4f8fd6;">C3:C10</div>
<div class="t" style="left:464.84px;top:175.35px;font-size:14.94px;color:#ececec;font-weight:normal;transform:scaleX(0.9441);transform-origin:0 0;-webkit-text-stroke:0.1px #ececec;">C3:C10</div>
<div class="t" style="left:579.34px;top:318.25px;font-size:14.94px;color:#111;font-weight:normal;transform:scaleX(1.0825);transform-origin:0 0;-webkit-text-stroke:0.3px #111;">,"&gt;5000",</div>
<div class="t" style="left:512.04px;top:175.35px;font-size:14.94px;color:#ececec;font-weight:normal;transform:scaleX(1.0825);transform-origin:0 0;-webkit-text-stroke:0.1px #ececec;">,"&gt;5000",</div>
<div class="t" style="left:644.25px;top:318.25px;font-size:14.94px;color:#e0786c;font-weight:normal;transform:scaleX(0.9883);transform-origin:0 0;-webkit-text-stroke:0.3px #e0786c;">B3:B10</div>
<div class="t" style="left:576.95px;top:175.35px;font-size:14.94px;color:#ececec;font-weight:normal;transform:scaleX(0.9883);transform-origin:0 0;-webkit-text-stroke:0.1px #ececec;">B3:B10</div>
<div class="t" style="left:692.93px;top:318.25px;font-size:14.94px;color:#111;font-weight:normal;-webkit-text-stroke:0.3px #111;">,</div>
<div class="t" style="left:625.63px;top:175.35px;font-size:14.94px;color:#ececec;font-weight:normal;-webkit-text-stroke:0.1px #ececec;">,</div>
<div class="t" style="left:265.40px;top:340.55px;font-size:14.94px;color:#111;font-weight:normal;transform:scaleX(1.0742);transform-origin:0 0;-webkit-text-stroke:0.3px #111;">"=South")</div>
<div class="t" style="left:198.10px;top:197.15px;font-size:14.94px;color:#ececec;font-weight:normal;transform:scaleX(1.0790);transform-origin:0 0;-webkit-text-stroke:0.1px #ececec;">"=South")</div>
</body></html>
